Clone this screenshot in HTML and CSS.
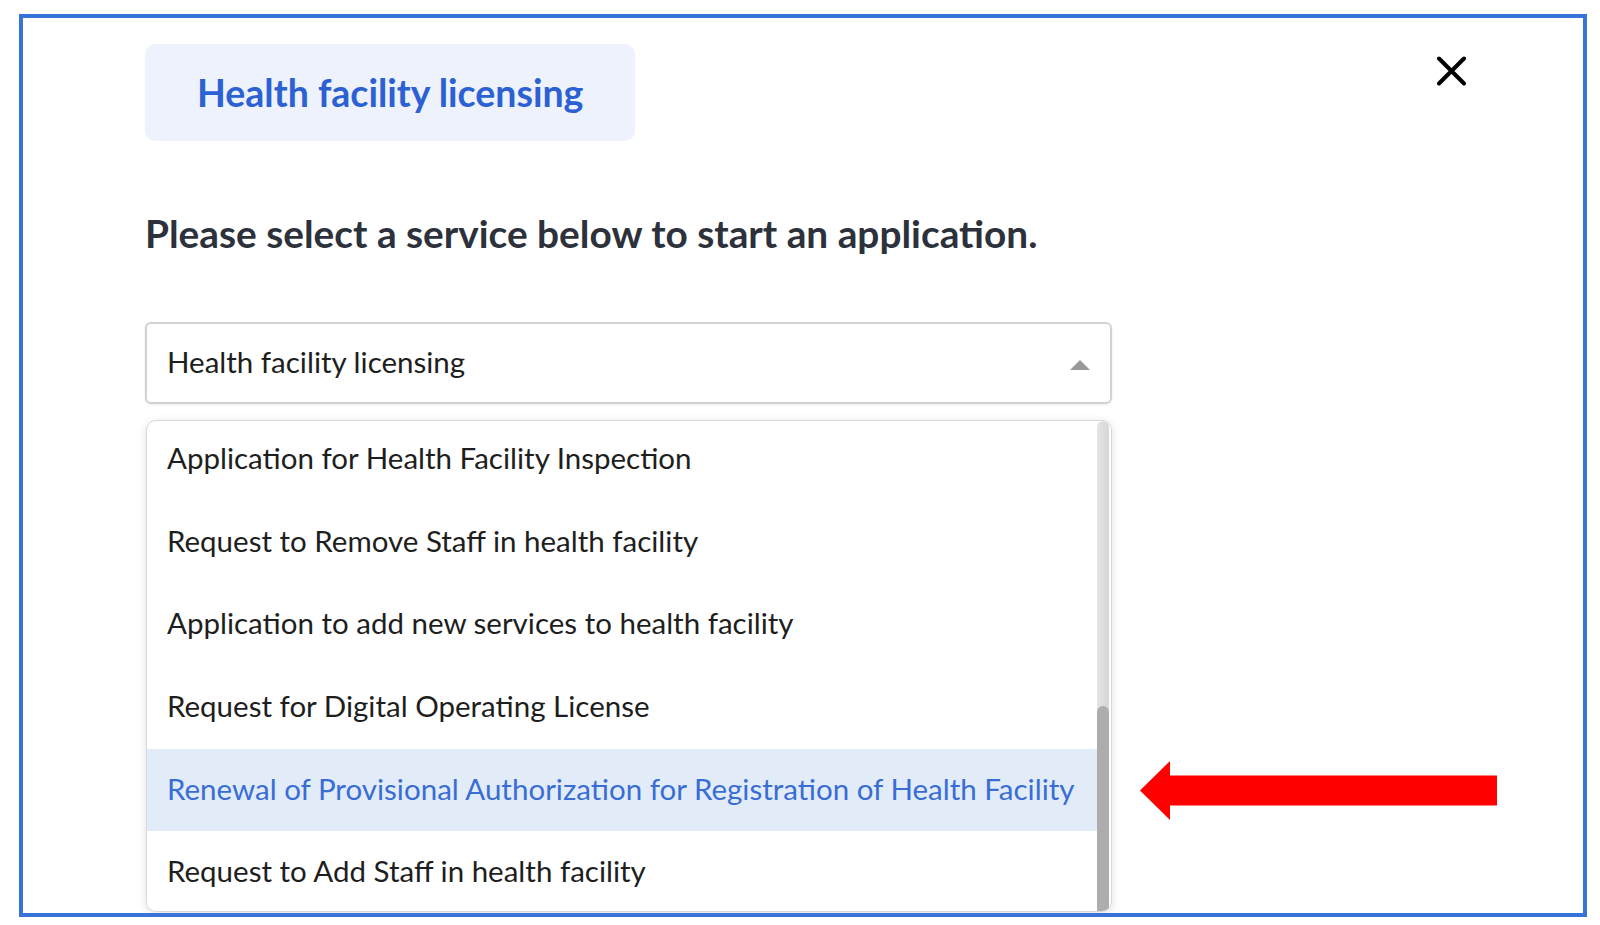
FILE: index.html
```html
<!DOCTYPE html>
<html lang="en">
<head>
    <meta charset="UTF-8">
    <meta name="viewport" content="width=device-width, initial-scale=1.0">
    <title>Health facility licensing</title>
    <link rel="stylesheet" href="styles.css">
</head>
<body>

    <div class="frame">

        <!-- Header: service badge + close -->
        <div class="header-row">
            <div class="badge">Health facility licensing</div>
            <button class="close-btn" aria-label="Close">
                <svg width="31" height="30" viewBox="0 0 31 30">
                    <path d="M3 2.5 L28 27.5 M28 2.5 L3 27.5" stroke="#000" stroke-width="4" stroke-linecap="round" fill="none"/>
                </svg>
            </button>
        </div>

        <h2 class="prompt">Please select a service below to start an application.</h2>

        <div class="select-box">
            <span class="select-value">Health facility licensing</span>
            <span class="select-arrow"></span>
        </div>

        <div class="menu">
            <div class="menu-list">
                <div class="menu-item">Application for Health Facility Inspection</div>
                <div class="menu-item">Request to Remove Staff in health facility</div>
                <div class="menu-item">Application to add new services to health facility</div>
                <div class="menu-item">Request for Digital Operating License</div>
                <div class="menu-item active">Renewal of Provisional Authorization for Registration of Health Facility</div>
                <div class="menu-item">Request to Add Staff in health facility</div>
            </div>
            <div class="scroll-track">
                <div class="scroll-thumb"></div>
            </div>
        </div>

        <!-- Annotation arrow -->
        <svg class="pointer-arrow" width="357" height="59" viewBox="0 0 357 59">
            <polygon points="0,29.5 30,0 30,14.5 357,14.5 357,44.5 30,44.5 30,59" fill="#ff0000"/>
        </svg>

    </div>

</body>
</html>
```

FILE: styles.css
```css
body {
    margin: 0;
    background-color: #fff;
    font-family: Lato, "Open Sans", sans-serif;
}
.frame {
    position: relative;
    box-sizing: border-box;
    width: 1568px;
    height: 903px;
    margin: 14px 0 0 19px;
    padding: 26px 116px 0 122px;
    border: 4px solid #3674da;
    background-color: #fff;
    overflow: hidden;
}
.header-row {
    display: flex;
    justify-content: space-between;
    align-items: flex-start;
}
.badge {
    display: flex;
    align-items: center;
    height: 97px;
    padding: 0 52px;
    background-color: #edf2fc;
    border-radius: 10px;
    color: #2b61d3;
    font-size: 37.5px;
    font-weight: bold;
}
.close-btn {
    margin-top: 12px;
    padding: 0;
    border: none;
    background: none;
    line-height: 0;
    cursor: pointer;
}
.prompt {
    margin: 69px 0 0;
    color: #2c313b;
    font-size: 38.8px;
    line-height: 46px;
    font-weight: bold;
}
.select-box {
    box-sizing: border-box;
    display: flex;
    align-items: center;
    justify-content: space-between;
    width: 967px;
    height: 82px;
    margin-top: 66px;
    padding: 0 20px 3px 20px;
    border: 2px solid #d2d2d2;
    border-radius: 6px;
    box-shadow: 0 1px 3px rgba(0, 0, 0, 0.08);
    color: #1e1e1e;
    font-size: 29.5px;
}
.select-arrow {
    width: 0;
    height: 0;
    border-left: 10px solid transparent;
    border-right: 10px solid transparent;
    border-bottom: 10px solid #999;
    margin-top: 7px;
}
.menu {
    box-sizing: border-box;
    display: flex;
    width: 966px;
    height: 492px;
    margin: 16px 0 0 1px;
    border: 1px solid #d8d8d8;
    border-radius: 10px;
    box-shadow: 0 2px 10px rgba(0, 0, 0, 0.12);
    overflow: hidden;
}
.menu-list {
    flex: 1;
    margin-top: -3px;
}
.menu-item {
    box-sizing: border-box;
    display: flex;
    align-items: center;
    height: 82.7px;
    padding: 0 0 4px 20px;
    color: #1e1e1e;
    font-size: 29.5px;
}
.menu-item.active {
    background-color: #e1ecf8;
    color: #3a6cd6;
}
.scroll-track {
    width: 12px;
    margin-right: 2px;
    border-radius: 6px 6px 0 0;
    background: linear-gradient(to right, #e4e4e4, #d6d6d6);
    display: flex;
    flex-direction: column;
    justify-content: flex-end;
}
.scroll-thumb {
    height: 205px;
    border-radius: 6px 6px 0 0;
    background-color: #adadad;
}
.pointer-arrow {
    position: absolute;
    left: 1117px;
    top: 743px;
}
```
